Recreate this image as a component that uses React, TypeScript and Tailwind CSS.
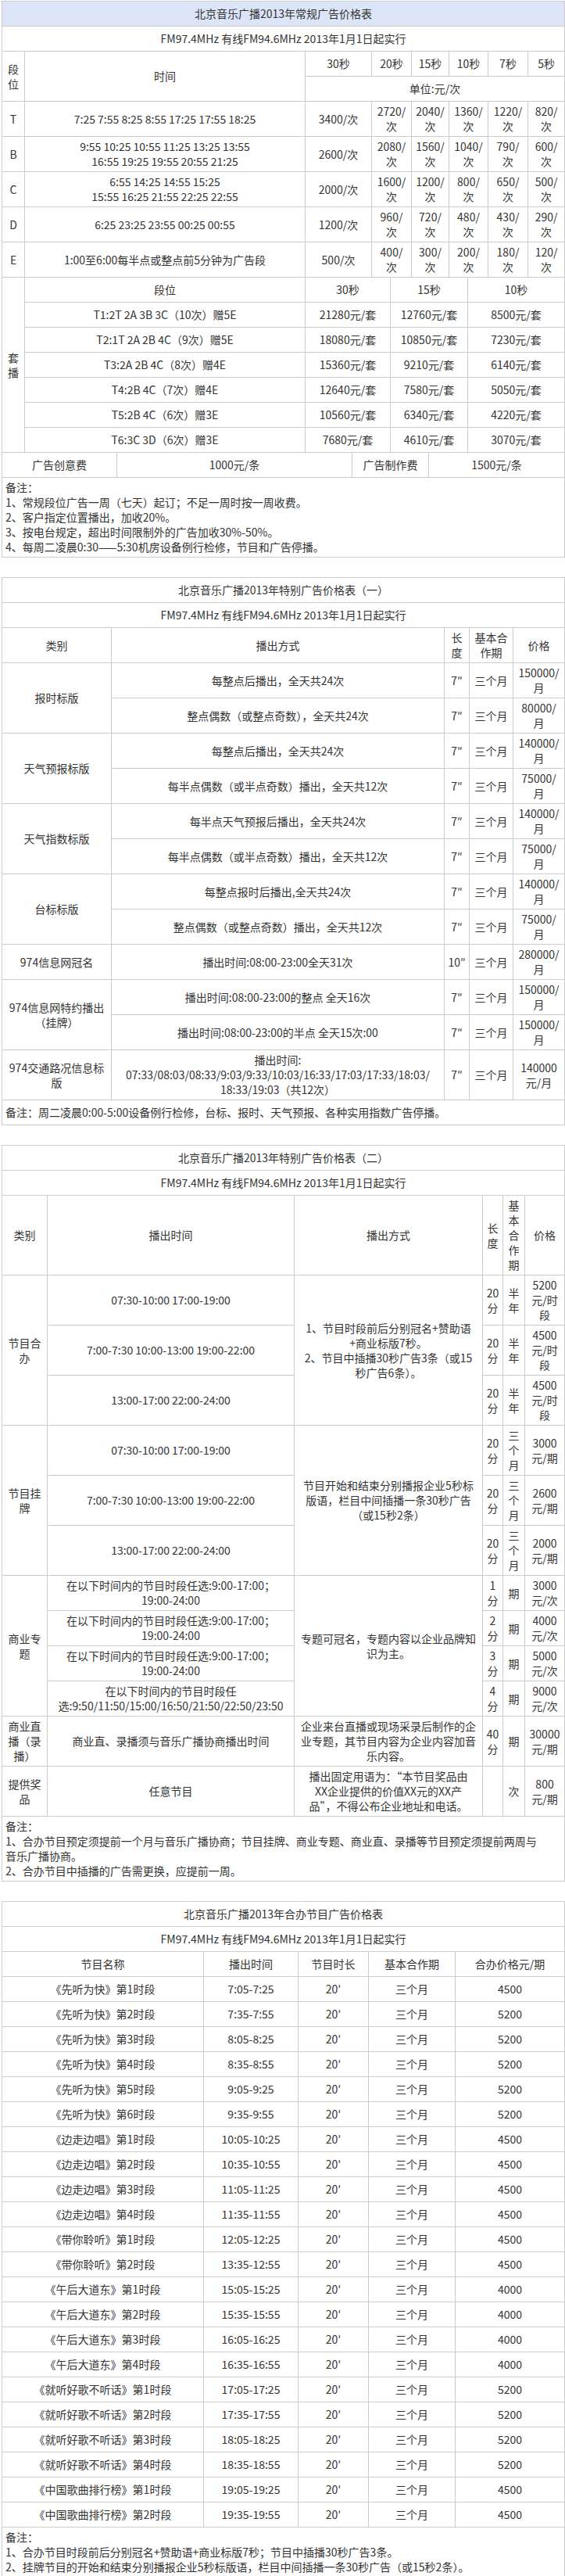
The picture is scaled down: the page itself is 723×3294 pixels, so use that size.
import React from 'react';

type CellProps = {
  children?: React.ReactNode;
  cs?: number;
  rs?: number;
  left?: boolean;
  className?: string;
};

// one bordered cell; text keeps its own line breaks (\n) and never wraps
const Td: React.FC<CellProps> = ({ children, cs, rs, left, className = '' }) => (
  <td
    colSpan={cs}
    rowSpan={rs}
    className={`border border-[#cccccc] px-[4px] py-[3px] align-middle whitespace-pre ${
      left ? 'text-left' : 'text-center'
    } ${className}`}
  >
    {children}
  </td>
);

const SUBTITLE = 'FM97.4MHz 有线FM94.6MHz 2013年1月1日起实行';

/* ---------------- 常规广告价格表 ---------------- */

const regularCols = [
  'w-[29px]', 'w-[118px]', 'w-[241px]', 'w-[60px]', 'w-[25px]', 'w-[24px]', 'w-[27px]',
  'w-[22px]', 'w-[26px]', 'w-[24px]', 'w-[26px]', 'w-[51px]', 'w-[47px]',
];

const regular = [
  { seg: 'T', time: '7:25 7:55 8:25 8:55 17:25 17:55 18:25', p30: '3400', rest: ['2720', '2040', '1360', '1220', '820'] },
  { seg: 'B', time: '9:55 10:25 10:55 11:25 13:25 13:55\n16:55 19:25 19:55 20:55 21:25', p30: '2600', rest: ['2080', '1560', '1040', '790', '600'] },
  { seg: 'C', time: '6:55 14:25 14:55 15:25\n15:55 16:25 21:55 22:25 22:55', p30: '2000', rest: ['1600', '1200', '800', '650', '500'] },
  { seg: 'D', time: '6:25 23:25 23:55 00:25 00:55', p30: '1200', rest: ['960', '720', '480', '430', '290'] },
  { seg: 'E', time: '1:00至6:00每半点或整点前5分钟为广告段', p30: '500', rest: ['400', '300', '200', '180', '120'] },
];

const packages = [
  ['T1:2T 2A 3B 3C（10次）赠5E', '21280', '12760', '8500'],
  ['T2:1T 2A 2B 4C（9次）赠5E', '18080', '10850', '7230'],
  ['T3:2A 2B 4C（8次）赠4E', '15360', '9210', '6140'],
  ['T4:2B 4C（7次）赠4E', '12640', '7580', '5050'],
  ['T5:2B 4C（6次）赠3E', '10560', '6340', '4220'],
  ['T6:3C 3D（6次）赠3E', '7680', '4610', '3070'],
];

const RegularTable = () => (
  <table className="w-[720px] table-fixed border-collapse">
    <colgroup>
      {regularCols.map((w, i) => (
        <col key={i} className={w} />
      ))}
    </colgroup>
    <tbody>
      <tr className="h-[32px]">
        <Td cs={13} className="bg-[#dbe5f7]">北京音乐广播2013年常规广告价格表</Td>
      </tr>
      <tr className="h-[32px]">
        <Td cs={13}>{SUBTITLE}</Td>
      </tr>
      <tr className="h-[32px]">
        <Td rs={2}>{'段\n位'}</Td>
        <Td cs={2} rs={2}>时间</Td>
        <Td cs={2}>30秒</Td>
        <Td cs={2}>20秒</Td>
        <Td cs={2}>15秒</Td>
        <Td cs={2}>10秒</Td>
        <Td>7秒</Td>
        <Td>5秒</Td>
      </tr>
      <tr className="h-[32px]">
        <Td cs={10}>单位:元/次</Td>
      </tr>
      {regular.map((r) => (
        <tr key={r.seg} className="h-[32px]">
          <Td>{r.seg}</Td>
          <Td cs={2}>{r.time}</Td>
          <Td cs={2}>{r.p30}/次</Td>
          <Td cs={2}>{r.rest[0]}/{'\n'}次</Td>
          <Td cs={2}>{r.rest[1]}/{'\n'}次</Td>
          <Td cs={2}>{r.rest[2]}/{'\n'}次</Td>
          <Td>{r.rest[3]}/{'\n'}次</Td>
          <Td>{r.rest[4]}/{'\n'}次</Td>
        </tr>
      ))}
      <tr className="h-[32px]">
        <Td rs={7}>{'套\n播'}</Td>
        <Td cs={2}>段位</Td>
        <Td cs={3}>30秒</Td>
        <Td cs={4}>15秒</Td>
        <Td cs={3}>10秒</Td>
      </tr>
      {packages.map((p) => (
        <tr key={p[0]} className="h-[32px]">
          <Td cs={2}>{p[0]}</Td>
          <Td cs={3}>{p[1]}元/套</Td>
          <Td cs={4}>{p[2]}元/套</Td>
          <Td cs={3}>{p[3]}元/套</Td>
        </tr>
      ))}
      <tr className="h-[32px]">
        <Td cs={2}>广告创意费</Td>
        <Td cs={2}>1000元/条</Td>
        <Td cs={4}>广告制作费</Td>
        <Td cs={5}>1500元/条</Td>
      </tr>
      <tr>
        <Td cs={13} left>
          {'备注：\n1、常规段位广告一周（七天）起订；不足一周时按一周收费。\n2、客户指定位置播出，加收20%。\n3、按电台规定，超出时间限制外的广告加收30%-50%。\n4、每周二凌晨0:30——5:30机房设备例行检修，节目和广告停播。'}
        </Td>
      </tr>
    </tbody>
  </table>
);

/* ---------------- 特别广告价格表（一） ---------------- */

type SpecialRow = { cat?: string; span?: number; way: string; len: string; price: string };

const special1: SpecialRow[] = [
  { cat: '报时标版', span: 2, way: '每整点后播出，全天共24次', len: '7″', price: '150000/\n月' },
  { way: '整点偶数（或整点奇数），全天共24次', len: '7″', price: '80000/\n月' },
  { cat: '天气预报标版', span: 2, way: '每整点后播出，全天共24次', len: '7″', price: '140000/\n月' },
  { way: '每半点偶数（或半点奇数）播出，全天共12次', len: '7″', price: '75000/\n月' },
  { cat: '天气指数标版', span: 2, way: '每半点天气预报后播出，全天共24次', len: '7″', price: '140000/\n月' },
  { way: '每半点偶数（或半点奇数）播出，全天共12次', len: '7″', price: '75000/\n月' },
  { cat: '台标标版', span: 2, way: '每整点报时后播出,全天共24次', len: '7″', price: '140000/\n月' },
  { way: '整点偶数（或整点奇数）播出，全天共12次', len: '7″', price: '75000/\n月' },
  { cat: '974信息网冠名', span: 1, way: '播出时间:08:00-23:00全天31次', len: '10″', price: '280000/\n月' },
  { cat: '974信息网特约播出\n（挂牌）', span: 2, way: '播出时间:08:00-23:00的整点 全天16次', len: '7″', price: '150000/\n月' },
  { way: '播出时间:08:00-23:00的半点 全天15次:00', len: '7″', price: '150000/\n月' },
  {
    cat: '974交通路况信息标\n版',
    span: 1,
    way: '播出时间:\n07:33/08:03/08:33/9:03/9:33/10:03/16:33/17:03/17:33/18:03/\n18:33/19:03（共12次）',
    len: '7″',
    price: '140000\n元/月',
  },
];

const SpecialTableOne = () => (
  <table className="w-[720px] table-fixed border-collapse">
    <colgroup>
      <col className="w-[140px]" />
      <col className="w-[426px]" />
      <col className="w-[32px]" />
      <col className="w-[56px]" />
      <col className="w-[66px]" />
    </colgroup>
    <tbody>
      <tr className="h-[32px]">
        <Td cs={5}>北京音乐广播2013年特别广告价格表（一）</Td>
      </tr>
      <tr className="h-[32px]">
        <Td cs={5}>{SUBTITLE}</Td>
      </tr>
      <tr>
        <Td>类别</Td>
        <Td>播出方式</Td>
        <Td>{'长\n度'}</Td>
        <Td>{'基本合\n作期'}</Td>
        <Td>价格</Td>
      </tr>
      {special1.map((r, i) => (
        <tr key={i} className="h-[32px]">
          {r.cat && <Td rs={r.span}>{r.cat}</Td>}
          <Td>{r.way}</Td>
          <Td>{r.len}</Td>
          <Td>三个月</Td>
          <Td>{r.price}</Td>
        </tr>
      ))}
      <tr className="h-[32px]">
        <Td cs={5} left>备注：周二凌晨0:00-5:00设备例行检修，台标、报时、天气预报、各种实用指数广告停播。</Td>
      </tr>
    </tbody>
  </table>
);

/* ---------------- 特别广告价格表（二） ---------------- */

const SpecialTableTwo = () => (
  <table className="w-[720px] table-fixed border-collapse">
    <colgroup>
      <col className="w-[58px]" />
      <col className="w-[316px]" />
      <col className="w-[241px]" />
      <col className="w-[26px]" />
      <col className="w-[28px]" />
      <col className="w-[51px]" />
    </colgroup>
    <tbody>
      <tr className="h-[32px]">
        <Td cs={6}>北京音乐广播2013年特别广告价格表（二）</Td>
      </tr>
      <tr className="h-[32px]">
        <Td cs={6}>{SUBTITLE}</Td>
      </tr>
      <tr>
        <Td>类别</Td>
        <Td>播出时间</Td>
        <Td>播出方式</Td>
        <Td>{'长\n度'}</Td>
        <Td>{'基\n本\n合\n作\n期'}</Td>
        <Td>价格</Td>
      </tr>

      <tr>
        <Td rs={3}>{'节目合\n办'}</Td>
        <Td>07:30-10:00 17:00-19:00</Td>
        <Td rs={3}>{'1、节目时段前后分别冠名+赞助语\n+商业标版7秒。\n2、节目中插播30秒广告3条（或15\n秒广告6条）。'}</Td>
        <Td>{'20\n分'}</Td>
        <Td>{'半\n年'}</Td>
        <Td>{'5200\n元/时\n段'}</Td>
      </tr>
      <tr>
        <Td>7:00-7:30 10:00-13:00 19:00-22:00</Td>
        <Td>{'20\n分'}</Td>
        <Td>{'半\n年'}</Td>
        <Td>{'4500\n元/时\n段'}</Td>
      </tr>
      <tr>
        <Td>13:00-17:00 22:00-24:00</Td>
        <Td>{'20\n分'}</Td>
        <Td>{'半\n年'}</Td>
        <Td>{'4500\n元/时\n段'}</Td>
      </tr>

      <tr>
        <Td rs={3}>{'节目挂\n牌'}</Td>
        <Td>07:30-10:00 17:00-19:00</Td>
        <Td rs={3}>{'节目开始和结束分别播报企业5秒标\n版语，栏目中间插播一条30秒广告\n（或15秒2条）'}</Td>
        <Td>{'20\n分'}</Td>
        <Td>{'三\n个\n月'}</Td>
        <Td>{'3000\n元/期'}</Td>
      </tr>
      <tr>
        <Td>7:00-7:30 10:00-13:00 19:00-22:00</Td>
        <Td>{'20\n分'}</Td>
        <Td>{'三\n个\n月'}</Td>
        <Td>{'2600\n元/期'}</Td>
      </tr>
      <tr>
        <Td>13:00-17:00 22:00-24:00</Td>
        <Td>{'20\n分'}</Td>
        <Td>{'三\n个\n月'}</Td>
        <Td>{'2000\n元/期'}</Td>
      </tr>

      <tr>
        <Td rs={4}>{'商业专\n题'}</Td>
        <Td>{'在以下时间内的节目时段任选:9:00-17:00；\n19:00-24:00'}</Td>
        <Td rs={4}>{'专题可冠名，专题内容以企业品牌知\n识为主。'}</Td>
        <Td>{'1\n分'}</Td>
        <Td>期</Td>
        <Td>{'3000\n元/次'}</Td>
      </tr>
      <tr>
        <Td>{'在以下时间内的节目时段任选:9:00-17:00；\n19:00-24:00'}</Td>
        <Td>{'2\n分'}</Td>
        <Td>期</Td>
        <Td>{'4000\n元/次'}</Td>
      </tr>
      <tr>
        <Td>{'在以下时间内的节目时段任选:9:00-17:00；\n19:00-24:00'}</Td>
        <Td>{'3\n分'}</Td>
        <Td>期</Td>
        <Td>{'5000\n元/次'}</Td>
      </tr>
      <tr>
        <Td>{'在以下时间内的节目时段任\n选:9:50/11:50/15:00/16:50/21:50/22:50/23:50'}</Td>
        <Td>{'4\n分'}</Td>
        <Td>期</Td>
        <Td>{'9000\n元/次'}</Td>
      </tr>

      <tr>
        <Td>{'商业直\n播（录\n播）'}</Td>
        <Td>商业直、录播须与音乐广播协商播出时间</Td>
        <Td>{'企业来台直播或现场采录后制作的企\n业专题，其节目内容为企业内容加音\n乐内容。'}</Td>
        <Td>{'40\n分'}</Td>
        <Td>期</Td>
        <Td>{'30000\n元/期'}</Td>
      </tr>
      <tr>
        <Td>{'提供奖\n品'}</Td>
        <Td>任意节目</Td>
        <Td>{'播出固定用语为：“本节目奖品由\nXX企业提供的价值XX元的XX产\n品”，不得公布企业地址和电话。'}</Td>
        <Td />
        <Td>次</Td>
        <Td>{'800\n元/期'}</Td>
      </tr>
      <tr>
        <Td cs={6} left>
          {'备注：\n1、合办节目预定须提前一个月与音乐广播协商；节目挂牌、商业专题、商业直、录播等节目预定须提前两周与\n音乐广播协商。\n2、合办节目中插播的广告需更换，应提前一周。'}
        </Td>
      </tr>
    </tbody>
  </table>
);

/* ---------------- 合办节目广告价格表 ---------------- */

const shows: [string, string, string][] = [
  ['《先听为快》第1时段', '7:05-7:25', '4500'],
  ['《先听为快》第2时段', '7:35-7:55', '5200'],
  ['《先听为快》第3时段', '8:05-8:25', '5200'],
  ['《先听为快》第4时段', '8:35-8:55', '5200'],
  ['《先听为快》第5时段', '9:05-9:25', '5200'],
  ['《先听为快》第6时段', '9:35-9:55', '5200'],
  ['《边走边唱》第1时段', '10:05-10:25', '4500'],
  ['《边走边唱》第2时段', '10:35-10:55', '4500'],
  ['《边走边唱》第3时段', '11:05-11:25', '4500'],
  ['《边走边唱》第4时段', '11:35-11:55', '4500'],
  ['《带你聆听》第1时段', '12:05-12:25', '4500'],
  ['《带你聆听》第2时段', '13:35-12:55', '4500'],
  ['《午后大道东》第1时段', '15:05-15:25', '4000'],
  ['《午后大道东》第2时段', '15:35-15:55', '4000'],
  ['《午后大道东》第3时段', '16:05-16:25', '4000'],
  ['《午后大道东》第4时段', '16:35-16:55', '4000'],
  ['《就听好歌不听话》第1时段', '17:05-17:25', '5200'],
  ['《就听好歌不听话》第2时段', '17:35-17:55', '5200'],
  ['《就听好歌不听话》第3时段', '18:05-18:25', '5200'],
  ['《就听好歌不听话》第4时段', '18:35-18:55', '5200'],
  ['《中国歌曲排行榜》第1时段', '19:05-19:25', '4500'],
  ['《中国歌曲排行榜》第2时段', '19:35-19:55', '4500'],
];

const CoopTable = () => (
  <table className="w-[720px] table-fixed border-collapse">
    <colgroup>
      <col className="w-[258px]" />
      <col className="w-[121px]" />
      <col className="w-[90px]" />
      <col className="w-[111px]" />
      <col className="w-[140px]" />
    </colgroup>
    <tbody>
      <tr className="h-[32px]">
        <Td cs={5}>北京音乐广播2013年合办节目广告价格表</Td>
      </tr>
      <tr className="h-[32px]">
        <Td cs={5}>{SUBTITLE}</Td>
      </tr>
      <tr className="h-[32px]">
        <Td>节目名称</Td>
        <Td>播出时间</Td>
        <Td>节目时长</Td>
        <Td>基本合作期</Td>
        <Td>合办价格元/期</Td>
      </tr>
      {shows.map(([name, time, price]) => (
        <tr key={name} className="h-[32px]">
          <Td>{name}</Td>
          <Td>{time}</Td>
          <Td>20′</Td>
          <Td>三个月</Td>
          <Td>{price}</Td>
        </tr>
      ))}
      <tr>
        <Td cs={5} left>
          {'备注：\n1、合办节目时段前后分别冠名+赞助语+商业标版7秒；节目中插播30秒广告3条。\n2、挂牌节目的开始和结束分别播报企业5秒标版语，栏目中间插播一条30秒广告（或15秒2条）。'}
        </Td>
      </tr>
    </tbody>
  </table>
);

export default function App() {
  return (
    <div className="min-h-screen bg-white pl-[2px] pt-[1px] text-[14px] leading-[19px] text-[#333333] font-['Noto_Sans_CJK_SC','Microsoft_YaHei',sans-serif]">
      <div className="flex flex-col gap-[25px]">
        <RegularTable />
        <SpecialTableOne />
        <SpecialTableTwo />
        <CoopTable />
      </div>
    </div>
  );
}
